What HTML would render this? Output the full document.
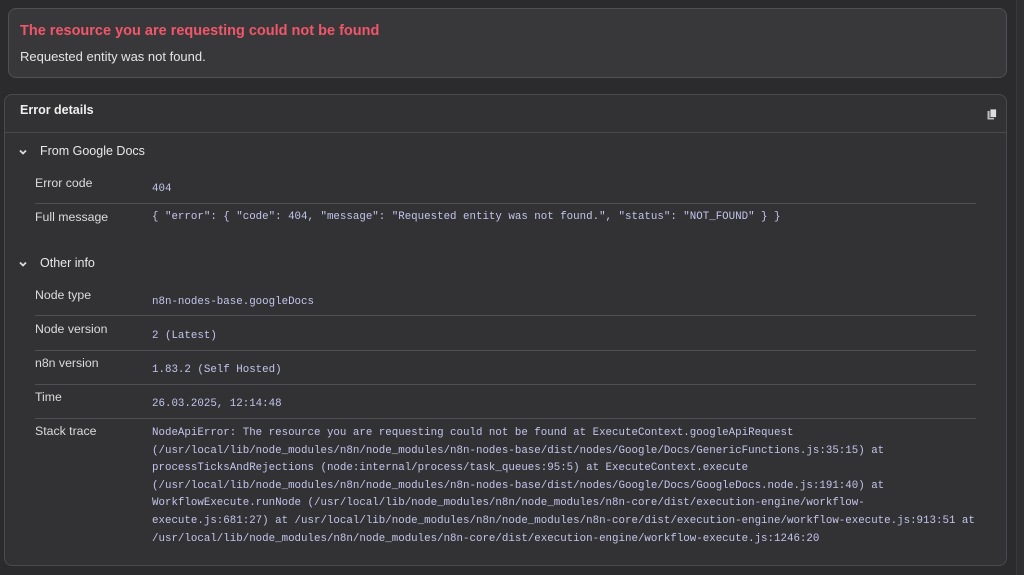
<!DOCTYPE html>
<html><head><meta charset="utf-8"><style>
*{box-sizing:border-box;margin:0;padding:0}
body{width:1024px;height:575px;background:#2b2b2e;font-family:"Liberation Sans",sans-serif;color:#e0e0e0;position:relative;overflow:hidden}
.sb{position:absolute;left:1016px;top:0;width:8px;height:575px;background:#2e2e31;border-left:1px solid #3a3a3d}
.err{position:absolute;left:8px;top:8px;width:999px;height:70px;background:#38383b;border:1px solid #505054;border-radius:8px}
.err .t{position:absolute;left:11px;top:14px;color:#f2566a;font-size:14.5px;font-weight:bold}
.err .s{position:absolute;left:11px;top:40px;color:#e4e4e4;font-size:13px}
.det{position:absolute;left:4px;top:94px;width:1003px;height:472px;background:#323235;border:1px solid #4a4a4e;border-radius:8px}
.hd{position:absolute;left:15px;top:8px;font-size:12.5px;font-weight:bold;color:#f0f0f0}
.hl{position:absolute;left:0;right:0;top:37px;border-top:1px solid #4a4a4e}
.sec{position:absolute;left:35px;font-size:12.5px;color:#e8e8e8}
.chev{position:absolute;left:13px;width:10px;height:10px}
.lab{position:absolute;left:30px;font-size:12.3px;color:#dcdcdc}
.val{position:absolute;left:147px;font-family:"Liberation Mono",monospace;font-size:10.8px;color:#c4c4ec;line-height:17.6px;white-space:pre}
.ln{position:absolute;left:30px;width:941px;border-top:1px solid #505054}
.cp{position:absolute;left:982px;top:14px}
</style></head><body>
<div class="sb"></div>
<div class="err"><div class="t">The resource you are requesting could not be found</div><div class="s">Requested entity was not found.</div></div>
<div class="det">
<div class="hd">Error details</div>
<svg class="cp" width="10" height="11" viewBox="0 0 10 11"><rect x="0.5" y="2" width="6.5" height="8.5" fill="#bbb"/><rect x="3" y="0" width="6.5" height="8.5" fill="#ddd" stroke="#323235" stroke-width="0.8"/></svg>
<div class="hl"></div>
<svg class="chev" style="top:52px" viewBox="0 0 10 10"><path d="M2 3.5 L5 6.5 L8 3.5" stroke="#ddd" stroke-width="1.8" fill="none"/></svg>
<div class="sec" style="top:49px">From Google Docs</div>
<div class="lab" style="top:81px">Error code</div><div class="val" style="top:86px">404</div>
<div class="ln" style="top:108px"></div>
<div class="lab" style="top:115px">Full message</div><div class="val" style="top:114px">{ "error": { "code": 404, "message": "Requested entity was not found.", "status": "NOT_FOUND" } }</div>
<svg class="chev" style="top:164px" viewBox="0 0 10 10"><path d="M2 3.5 L5 6.5 L8 3.5" stroke="#ddd" stroke-width="1.8" fill="none"/></svg>
<div class="sec" style="top:161px">Other info</div>
<div class="lab" style="top:193px">Node type</div><div class="val" style="top:199px">n8n-nodes-base.googleDocs</div>
<div class="ln" style="top:220px"></div>
<div class="lab" style="top:227px">Node version</div><div class="val" style="top:233px">2 (Latest)</div>
<div class="ln" style="top:255px"></div>
<div class="lab" style="top:261px">n8n version</div><div class="val" style="top:267px">1.83.2 (Self Hosted)</div>
<div class="ln" style="top:289px"></div>
<div class="lab" style="top:295px">Time</div><div class="val" style="top:301px">26.03.2025, 12:14:48</div>
<div class="ln" style="top:323px"></div>
<div class="lab" style="top:329px">Stack trace</div><div class="val" style="top:330px">NodeApiError: The resource you are requesting could not be found at ExecuteContext.googleApiRequest
(/usr/local/lib/node_modules/n8n/node_modules/n8n-nodes-base/dist/nodes/Google/Docs/GenericFunctions.js:35:15) at
processTicksAndRejections (node:internal/process/task_queues:95:5) at ExecuteContext.execute
(/usr/local/lib/node_modules/n8n/node_modules/n8n-nodes-base/dist/nodes/Google/Docs/GoogleDocs.node.js:191:40) at
WorkflowExecute.runNode (/usr/local/lib/node_modules/n8n/node_modules/n8n-core/dist/execution-engine/workflow-
execute.js:681:27) at /usr/local/lib/node_modules/n8n/node_modules/n8n-core/dist/execution-engine/workflow-execute.js:913:51 at
/usr/local/lib/node_modules/n8n/node_modules/n8n-core/dist/execution-engine/workflow-execute.js:1246:20</div>
</div>
</body></html>
